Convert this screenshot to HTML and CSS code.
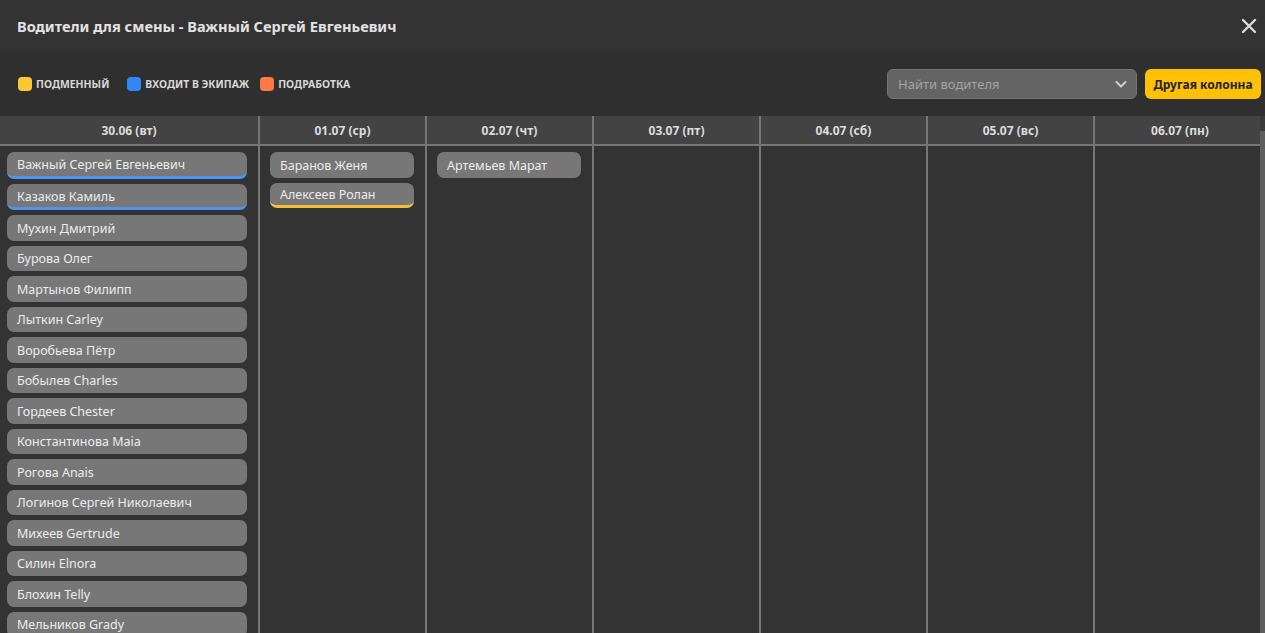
FILE: index.html
```html
<!DOCTYPE html>
<html lang="ru">

<head>
  <meta charset="UTF-8">
  <title>Водители для смены</title>
  <meta name="viewport" content="width=device-width, initial-scale=1.0" />
  <link rel="stylesheet" href="styles.css">
</head>

<body>
  <div class="modal">
    <div class="modal-header">
      <h2>Водители для смены - Важный Сергей Евгеньевич</h2>
      <button class="close-btn" aria-label="Закрыть">
        <svg width="16" height="16" viewBox="0 0 16 16">
          <path d="M2 2 L14 14 M14 2 L2 14" stroke="#dcdcdc" stroke-width="2.4" stroke-linecap="round" />
        </svg>
      </button>
    </div>

    <div class="toolbar">
      <div class="legend">
        <span class="legend-item"><span class="dot yellow"></span>Подменный</span>
        <span class="legend-item"><span class="dot blue"></span>Входит в экипаж</span>
        <span class="legend-item"><span class="dot orange"></span>Подработка</span>
      </div>
      <div class="actions">
        <div class="search">
          <input type="text" placeholder="Найти водителя">
          <svg class="chevron" width="14" height="14" viewBox="0 0 14 14">
            <path d="M2.5 5 L7 9.5 L11.5 5" fill="none" stroke="#cfcfcf" stroke-width="2" stroke-linecap="round" stroke-linejoin="round" />
          </svg>
        </div>
        <button class="other-btn">Другая колонна</button>
      </div>
    </div>

    <div class="schedule">
      <div class="day first">
        <div class="day-head">30.06 (вт)</div>
        <div class="day-body">
          <div class="driver crew">Важный Сергей Евгеньевич</div>
          <div class="driver crew">Казаков Камиль</div>
          <div class="driver">Мухин Дмитрий</div>
          <div class="driver">Бурова Олег</div>
          <div class="driver">Мартынов Филипп</div>
          <div class="driver">Лыткин Carley</div>
          <div class="driver">Воробьева Пётр</div>
          <div class="driver">Бобылев Charles</div>
          <div class="driver">Гордеев Chester</div>
          <div class="driver">Константинова Maia</div>
          <div class="driver">Рогова Anais</div>
          <div class="driver">Логинов Сергей Николаевич</div>
          <div class="driver">Михеев Gertrude</div>
          <div class="driver">Силин Elnora</div>
          <div class="driver">Блохин Telly</div>
          <div class="driver">Мельников Grady</div>
        </div>
      </div>
      <div class="day">
        <div class="day-head">01.07 (ср)</div>
        <div class="day-body">
          <div class="driver">Баранов Женя</div>
          <div class="driver spare">Алексеев Ролан</div>
        </div>
      </div>
      <div class="day">
        <div class="day-head">02.07 (чт)</div>
        <div class="day-body">
          <div class="driver">Артемьев Марат</div>
        </div>
      </div>
      <div class="day">
        <div class="day-head">03.07 (пт)</div>
        <div class="day-body"></div>
      </div>
      <div class="day">
        <div class="day-head">04.07 (сб)</div>
        <div class="day-body"></div>
      </div>
      <div class="day">
        <div class="day-head">05.07 (вс)</div>
        <div class="day-body"></div>
      </div>
      <div class="day last">
        <div class="day-head">06.07 (пн)</div>
        <div class="day-body"></div>
      </div>

      <div class="scrollbar"><div class="thumb"></div></div>
    </div>
  </div>
</body>

</html>
```

FILE: styles.css
```css
* {
  box-sizing: border-box;
}

body {
  font-family: "Noto Sans", "Open Sans", sans-serif;
  margin: 0;
  background: #333333;
  height: 633px;
  overflow: hidden;
}

.modal {
  display: flex;
  flex-direction: column;
  height: 633px;
}

.modal-header {
  display: flex;
  align-items: center;
  justify-content: space-between;
  height: 52px;
  padding: 0 7px 0 17px;
  background: #333333;
  flex-shrink: 0;
}

.modal-header h2 {
  margin: 0;
  font-size: 14.6px;
  font-weight: 700;
  color: #e2e2e2;
}

.close-btn {
  background: none;
  border: none;
  padding: 0;
  width: 18px;
  height: 18px;
  display: flex;
  align-items: center;
  justify-content: center;
  cursor: pointer;
}

.toolbar {
  display: flex;
  align-items: center;
  justify-content: space-between;
  height: 64px;
  padding: 0 4px 0 18px;
  background: #2f2f2f;
  flex-shrink: 0;
}

.legend {
  display: flex;
}

.legend-item {
  display: flex;
  align-items: center;
  gap: 4px;
  margin-right: 18px;
  font-size: 10.4px;
  font-weight: 700;
  text-transform: uppercase;
  color: #d8d8d8;
}

.legend-item:nth-child(2) {
  margin-right: 11px;
}

.dot {
  width: 14px;
  height: 14px;
  border-radius: 4px;
}

.dot.yellow {
  background: #ffc734;
}

.dot.blue {
  background: #2f86f6;
}

.dot.orange {
  background: #ff7845;
}

.actions {
  display: flex;
  align-items: center;
  gap: 8px;
}

.search {
  position: relative;
  width: 250px;
  height: 30px;
}

.search input {
  width: 100%;
  height: 100%;
  padding: 0 30px 0 10px;
  background: #646464;
  border: 1px solid #747474;
  border-radius: 6px;
  font-family: inherit;
  font-size: 13px;
  color: #eee;
}

.search input::placeholder {
  color: #a3a3a3;
}

.chevron {
  position: absolute;
  right: 9px;
  top: 8px;
}

.other-btn {
  width: 116px;
  height: 30px;
  background: #ffc107;
  border: none;
  border-radius: 6px;
  font-family: inherit;
  font-size: 12px;
  font-weight: 700;
  color: #222;
  cursor: pointer;
}

.schedule {
  position: relative;
  flex: 1;
  min-height: 0;
  display: flex;
  overflow: hidden;
}

.day {
  width: 167px;
  border-right: 2px solid #767676;
  display: flex;
  flex-direction: column;
  min-height: 0;
}

.day.first {
  width: 260px;
}

.day.last {
  flex: 1;
  border-right: none;
}

.day-head {
  height: 30px;
  flex-shrink: 0;
  display: flex;
  align-items: center;
  justify-content: center;
  background: #434343;
  border-bottom: 2px solid #767676;
  font-size: 12px;
  font-weight: 700;
  color: #dcdcdc;
}

.day-body {
  flex: 1;
  min-height: 0;
  overflow: hidden;
  padding: 6px 0 0 10px;
  background: #333333;
}

.day.first .day-body {
  padding-left: 7px;
}

.driver {
  width: 144px;
  height: 25.5px;
  margin-bottom: 5px;
  padding: 1px 10px 0;
  display: flex;
  align-items: center;
  background: #777777;
  border-radius: 7px;
  font-size: 12.5px;
  color: #ececec;
  white-space: nowrap;
}

.day.first .driver {
  width: 240px;
}

.driver.crew {
  border-bottom: 3px solid #4f95ef;
  padding-top: 2px;
  height: 26.5px;
}

.driver.spare {
  border-bottom: 3px solid #f6bd3a;
  padding-top: 2px;
}

.scrollbar {
  position: absolute;
  right: 0;
  top: 0;
  bottom: 0;
  width: 5px;
  background: #3a3a3a;
}

.thumb {
  margin-top: 15px;
  height: 100%;
  background: #5e5e5e;
}
```
